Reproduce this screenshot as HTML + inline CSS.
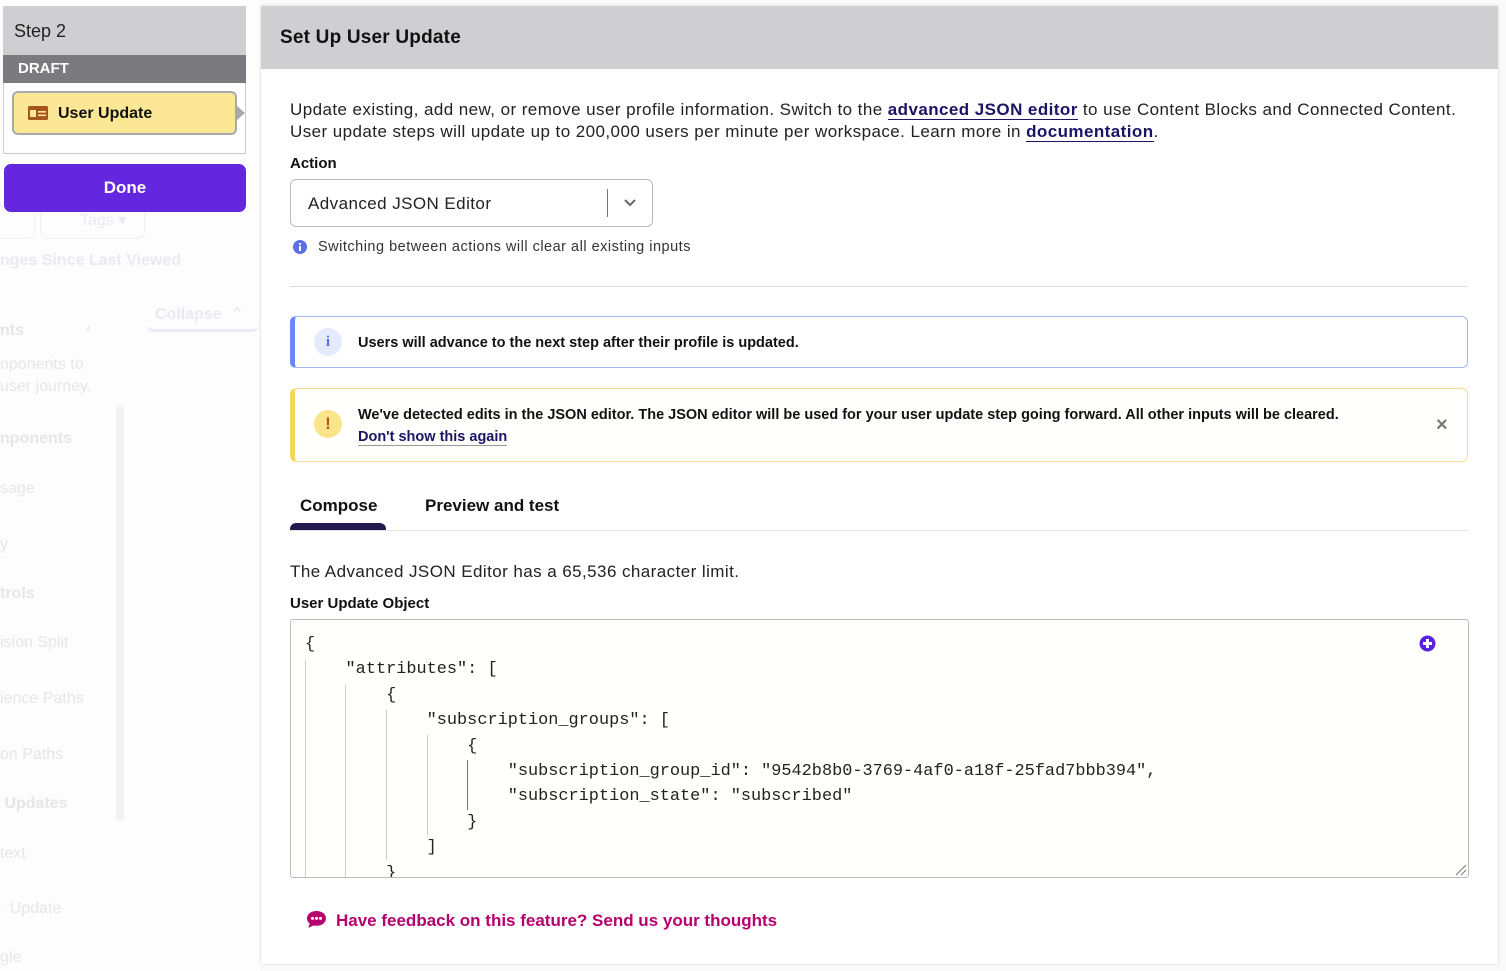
<!DOCTYPE html>
<html><head><meta charset="utf-8"><style>
*{box-sizing:border-box;margin:0;padding:0}
body{width:1506px;height:971px;overflow:hidden;background:#fafafa;font-family:"Liberation Sans",sans-serif;color:#111;position:relative}
.a{position:absolute}
.ghost{color:#ebe8f3;font-size:16px;font-weight:bold;white-space:nowrap}
.ghost2{color:#e6e6e6;font-size:16px;white-space:nowrap}
.panel{left:261px;top:6px;width:1237px;height:958px;background:#fff;box-shadow:0 0 3px rgba(0,0,0,.15)}
.hdr{left:261px;top:6px;width:1237px;height:63px;background:#cfcfd1}
.code{font-family:"Liberation Mono",monospace;font-size:16.9px;white-space:pre;color:#222}
.gl{position:absolute;width:1px;background:#ccc}
.ls{letter-spacing:0.43px}
</style></head><body>
<div class="a" style="left:0;top:0;width:260px;height:971px;background:#fdfdfd"></div>
<div class="a" style="left:40px;top:205px;width:105px;height:34px;border:1px solid #f0eef5;border-radius:8px"></div>
<div class="a" style="left:-10px;top:205px;width:45px;height:34px;border:1px solid #f0eef5;border-radius:8px"></div>
<div class="a ghost" style="left:80px;top:210px;font-weight:normal">Tags ▾</div>
<div class="a ghost" style="left:0;top:252px">nges Since Last Viewed</div>
<div class="a" style="left:146px;top:298px;width:114px;height:34px;border-bottom:3px solid #efeaf9;border-radius:8px"></div>
<div class="a ghost" style="left:155px;top:304px">Collapse &nbsp;⌃</div>
<div class="a ghost2" style="left:0;top:322px;font-weight:bold;color:#e4e4e4">nts</div>
<div class="a ghost" style="left:86px;top:320px">‹</div>
<div class="a ghost2" style="left:0;top:356px">nponents to</div>
<div class="a ghost2" style="left:0;top:378px">user journey.</div>
<div class="a" style="left:116px;top:405px;width:8px;height:416px;background:#f2f2f2;border-radius:4px"></div>
<div class="a ghost2" style="left:0;top:430px;font-weight:bold">nponents</div>
<div class="a ghost2" style="left:0;top:480px">sage</div>
<div class="a ghost2" style="left:0;top:536px">y</div>
<div class="a ghost2" style="left:0;top:585px;font-weight:bold">trols</div>
<div class="a ghost2" style="left:0;top:634px">ision Split</div>
<div class="a ghost2" style="left:0;top:690px">ience Paths</div>
<div class="a ghost2" style="left:0;top:746px">on Paths</div>
<div class="a ghost2" style="left:0;top:795px;font-weight:bold">&nbsp;Updates</div>
<div class="a ghost2" style="left:0;top:845px">text</div>
<div class="a ghost2" style="left:0;top:900px">· Update</div>
<div class="a ghost2" style="left:0;top:949px">gle</div>

<div class="a" style="left:3px;top:6px;width:243px;height:148px;background:#fff;border:1px solid #ccc"></div>
<div class="a" style="left:3px;top:6px;width:243px;height:49px;background:#cfcfd1;font-size:18px;padding:15px 0 0 11px;color:#222">Step 2</div>
<div class="a" style="left:3px;top:55px;width:243px;height:28px;background:#7b7b7f;color:#fff;font-size:15px;font-weight:bold;padding:5px 0 0 15px">DRAFT</div>
<div class="a" style="left:12px;top:91px;width:225px;height:44px;background:#fbe795;border:2px solid #a9a9ad;border-radius:6px"></div>
<div class="a" style="left:237px;top:106px;width:0;height:0;border-top:7px solid transparent;border-bottom:7px solid transparent;border-left:8px solid #a9a9ad"></div>
<svg class="a" style="left:28px;top:106px" width="20" height="14" viewBox="0 0 20 14"><rect x="0" y="0" width="20" height="14" rx="1.5" fill="#a5561c"/><rect x="2" y="4" width="6" height="7" fill="#fbe795"/><rect x="10" y="5" width="8" height="1.6" fill="#fbe795"/><rect x="10" y="8.5" width="8" height="1.6" fill="#fbe795"/></svg>
<div class="a" style="left:58px;top:105px;font-size:16px;font-weight:bold">User Update</div>
<div class="a" style="left:4px;top:164px;width:242px;height:48px;background:#6526e0;border-radius:7px;color:#fff;font-size:17px;font-weight:bold;text-align:center;line-height:48px">Done</div>

<div class="a panel"></div>
<div class="a hdr"></div>
<div class="a" style="left:280px;top:27px;font-size:19px;font-weight:bold;letter-spacing:0.2px">Set Up User Update</div>
<div class="a ls" style="left:290px;top:99px;font-size:17px;line-height:22px;color:#222;white-space:nowrap">Update existing, add new, or remove user profile information. Switch to the <b style="color:#1b1464;border-bottom:1px solid #1b1464">advanced JSON editor</b> to use Content Blocks and Connected Content.<br>User update steps will update up to 200,000 users per minute per workspace. Learn more in <b style="color:#1b1464;border-bottom:1px solid #1b1464">documentation</b>.</div>
<div class="a" style="left:290px;top:155px;font-size:15px;font-weight:bold">Action</div>
<div class="a" style="left:290px;top:179px;width:363px;height:48px;border:1px solid #bbb;border-radius:6px"></div>
<div class="a ls" style="left:308px;top:194px;font-size:17px;color:#222">Advanced JSON Editor</div>
<div class="a" style="left:607px;top:189px;width:1px;height:28px;background:#777"></div>
<svg class="a" style="left:623px;top:198px" width="14" height="10" viewBox="0 0 14 10"><path d="M2 2l5 5 5-5" stroke="#666" stroke-width="2" fill="none"/></svg>
<svg class="a" style="left:293px;top:240px" width="14" height="14"><circle cx="7" cy="7" r="7" fill="#5b6ee6"/><rect x="6" y="6" width="2" height="5" fill="#fff"/><circle cx="7" cy="4" r="1.1" fill="#fff"/></svg>
<div class="a" style="left:318px;top:239px;font-size:14.5px;color:#333;letter-spacing:0.5px">Switching between actions will clear all existing inputs</div>
<div class="a" style="left:290px;top:286px;width:1178px;height:1px;background:#ddd"></div>

<div class="a" style="left:290px;top:316px;width:1178px;height:52px;border:1px solid #a8b4f8;border-left:5px solid #6b88f7;border-radius:6px"></div>
<div class="a" style="left:314px;top:328px;width:28px;height:28px;border-radius:50%;background:#e6eafd;color:#5b6ee6;font-weight:bold;text-align:center;line-height:28px;font-size:15px;font-family:'Liberation Serif',serif">i</div>
<div class="a" style="left:358px;top:335px;font-size:14.5px;font-weight:bold">Users will advance to the next step after their profile is updated.</div>

<div class="a" style="left:290px;top:388px;width:1178px;height:74px;border:1px solid #f8e08a;border-left:5px solid #f6d65c;border-radius:6px;background:#fffffe"></div>
<div class="a" style="left:314px;top:410px;width:28px;height:28px;border-radius:50%;background:#fbe58a;color:#b3531c;font-weight:bold;text-align:center;line-height:28px;font-size:17px">!</div>
<div class="a" style="left:358px;top:407px;font-size:14.5px;font-weight:bold;white-space:nowrap">We've detected edits in the JSON editor. The JSON editor will be used for your user update step going forward. All other inputs will be cleared.</div>
<div class="a" style="left:358px;top:429px;font-size:14.5px;font-weight:bold;color:#1b1464;border-bottom:1px solid #999">Don't show this again</div>
<div class="a" style="left:1436px;top:414px;font-size:20px;font-weight:bold;color:#777">×</div>

<div class="a" style="left:300px;top:496px;font-size:17px;font-weight:bold">Compose</div>
<div class="a" style="left:425px;top:496px;font-size:17px;font-weight:bold">Preview and test</div>
<div class="a" style="left:290px;top:530px;width:1178px;height:1px;background:#e4e4e4"></div>
<div class="a" style="left:290px;top:523px;width:96px;height:7px;background:#211a4f;border-radius:6px 6px 0 0"></div>

<div class="a ls" style="left:290px;top:562px;font-size:17px;color:#222">The Advanced JSON Editor has a 65,536 character limit.</div>
<div class="a" style="left:290px;top:595px;font-size:15px;font-weight:bold">User Update Object</div>
<div class="a" style="left:290px;top:619px;width:1179px;height:259px;border:1px solid #bbb;border-radius:3px;background:#fffffd;overflow:hidden">
<div class="gl" style="left:14px;top:40px;height:220px"></div>
<div class="gl" style="left:54px;top:65px;height:200px"></div>
<div class="gl" style="left:95px;top:90px;height:150px"></div>
<div class="gl" style="left:136px;top:115px;height:100px"></div>
<div class="gl" style="left:176px;top:140px;height:50px;background:#777"></div>
<div class="code a" style="left:14px;top:12px;line-height:25.4px">{
    "attributes": [
        {
            "subscription_groups": [
                {
                    "subscription_group_id": "9542b8b0-3769-4af0-a18f-25fad7bbb394",
                    "subscription_state": "subscribed"
                }
            ]
        }</div>
<svg class="a" style="left:1128px;top:15px" width="17" height="17"><circle cx="8.5" cy="8.5" r="8" fill="#5a24df"/><rect x="7" y="4" width="3" height="9" fill="#fff"/><rect x="4" y="7" width="9" height="3" fill="#fff"/></svg>
<svg class="a" style="left:1164px;top:244px" width="12" height="12"><path d="M1 11L11 1M6 11L11 6" stroke="#777" stroke-width="1"/></svg>
</div>

<svg class="a" style="left:306px;top:910px" width="21" height="19" viewBox="0 0 21 19"><path d="M10.5 1C5 1 1 4.3 1 8.4c0 2 1 3.8 2.6 5.1L2.5 18l5-2.6c1 .3 2 .4 3 .4 5.5 0 9.5-3.3 9.5-7.4S16 1 10.5 1z" fill="#b5006e"/><circle cx="6.5" cy="8.4" r="1.5" fill="#fff"/><circle cx="10.5" cy="8.4" r="1.5" fill="#fff"/><circle cx="14.5" cy="8.4" r="1.5" fill="#fff"/></svg>
<div class="a" style="left:336px;top:911px;font-size:17px;font-weight:bold;color:#b5006e">Have feedback on this feature? Send us your thoughts</div>
</body></html>
